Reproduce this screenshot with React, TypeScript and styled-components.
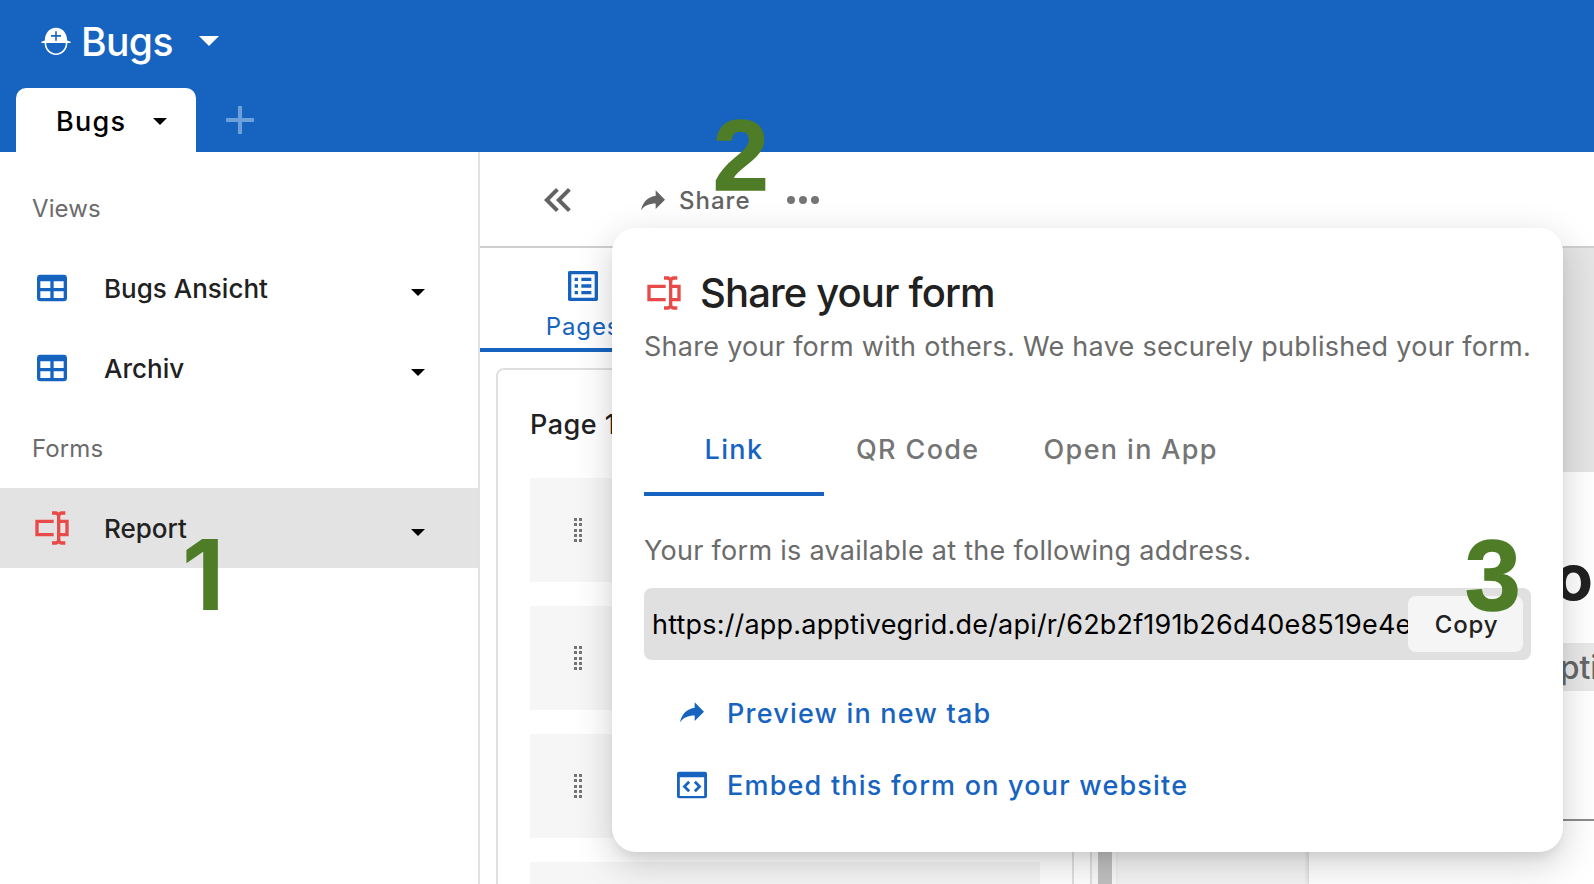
import React from 'react';
import styled, { createGlobalStyle } from 'styled-components';

const BLUE = '#1764c0';
const RED = '#e84a49';
const INK = '#212121';

const GlobalStyle = createGlobalStyle`
  *, *::before, *::after { box-sizing: border-box; }
  body {
    margin: 0;
    background: #fff;
    font-family: Inter, "Liberation Sans", sans-serif;
    overflow: hidden;
  }
`;

/* ---------- icons ---------- */

const Glyph = styled.svg<{ $size: number; $color: string }>`
  display: block;
  flex: none;
  width: ${p => p.$size}px;
  height: ${p => p.$size}px;
  fill: ${p => p.$color};
`;

type IconProps = { size: number; color: string };

const makeIcon = (d: string) => ({ size, color }: IconProps) => (
  <Glyph $size={size} $color={color} viewBox="0 0 24 24">
    <path d={d} />
  </Glyph>
);

const FormIcon = makeIcon(
  'M17,7H22V17H17V19A1,1 0 0,0 18,20H20V22H17.5C16.95,22 16,21.55 16,21C16,21.55 15.05,22 14.5,22H12V20H14A1,1 0 0,0 15,19V5A1,1 0 0,0 14,4H12V2H14.5C15.05,2 16,2.45 16,3C16,2.45 16.95,2 17.5,2H20V4H18A1,1 0 0,0 17,5V7M2,7H13V9H4V15H13V17H2V7M20,15V9H17V15H20Z'
);
const TableIcon = makeIcon(
  'M5,4H19A2,2 0 0,1 21,6V18A2,2 0 0,1 19,20H5A2,2 0 0,1 3,18V6A2,2 0 0,1 5,4M5,8V12H11V8H5M13,8V12H19V8H13M5,14V18H11V14H5M13,14V18H19V14H13Z'
);
const PagesIcon = makeIcon(
  'M19 5v14H5V5h14m1.1-2H3.9c-.5 0-.9.4-.9.9v16.2c0 .4.4.9.9.9h16.2c.4 0 .9-.5.9-.9V3.9c0-.5-.5-.9-.9-.9zM11 7h6v2h-6V7zm0 4h6v2h-6v-2zm0 4h6v2h-6zM7 7h2v2H7zm0 4h2v2H7zm0 4h2v2H7z'
);
const ShareIcon = makeIcon('M21,11L14,4V8C7,9 4,14 3,19C5.5,15.5 9,13.9 14,13.9V18L21,11Z');
const CollapseIcon = makeIcon(
  'M18.41,7.41L17,6L11,12L17,18L18.41,16.59L13.83,12L18.41,7.41M12.41,7.41L11,6L5,12L11,18L12.41,16.59L7.83,12L12.41,7.41Z'
);
const MoreIcon = makeIcon(
  'M6 10a2 2 0 1 0 0 4 2 2 0 0 0 0-4zM12 10a2 2 0 1 0 0 4 2 2 0 0 0 0-4zM18 10a2 2 0 1 0 0 4 2 2 0 0 0 0-4z'
);
const EmbedIcon = makeIcon(
  'M4.2 4H19.8A1.2 1.2 0 0 1 21 5.2V18.8A1.2 1.2 0 0 1 19.8 20H4.2A1.2 1.2 0 0 1 3 18.8V5.2A1.2 1.2 0 0 1 4.2 4ZM4.7 7.3V18.6H19.3V7.3ZM9.7 9.4L10.9 10.6L8.6 12.9L10.9 15.2L9.7 16.4L6.3 12.9ZM14.3 9.4L17.7 12.9L14.3 16.4L13.1 15.2L15.4 12.9L13.1 10.6Z'
);

const HelmetIcon = () => (
  <svg width="30" height="29" viewBox="0 0 30 29">
    <path
      fill="#fff"
      fillRule="evenodd"
      d="M3.8 13.4C4 6.2 8.6.8 15 .8S26 6.2 26.2 13.4L29.6 14.8V16H26.4C26.4 22.6 21.4 28 15 28S3.6 22.6 3.6 16H.4V14.8ZM14.2 4.2V8.1H10V9.7H14.2V13.8H15.8V9.7H20V8.1H15.8V4.2ZM5.2 16C5.2 21.6 9.4 26.4 15 26.4S24.8 21.6 24.8 16Z"
    />
  </svg>
);

const Caret = styled.span<{ $half: number; $color: string }>`
  flex: none;
  border: ${p => p.$half}px solid transparent;
  border-top: ${p => p.$half + 0.5}px solid ${p => p.$color};
  border-bottom: 0;
`;

/* ---------- shell ---------- */

const Screen = styled.div`
  position: relative;
  width: 1594px;
  height: 884px;
  overflow: hidden;
  display: flex;
  flex-direction: column;
`;

const Header = styled.header`
  height: 152px;
  flex: none;
  background: ${BLUE};
  display: flex;
  flex-direction: column;
  justify-content: space-between;
`;

const SpaceName = styled.div`
  display: flex;
  align-items: center;
  height: 82px;
  padding-left: 41px;
  color: #fff;
  font-size: 39px;
  font-weight: 500;
  letter-spacing: -0.6px;

  span:first-of-type { margin: 0 26px 0 10px; }
`;

const TabStrip = styled.nav`
  display: flex;
  align-items: center;
  padding-left: 16px;
  height: 64px;
`;

const SpaceTab = styled.div`
  display: flex;
  align-items: center;
  width: 180px;
  height: 64px;
  padding: 2px 0 0 40px;
  border-radius: 10px 10px 0 0;
  background: #fff;
  color: #000;
  font-size: 27px;
  font-weight: 500;
  letter-spacing: 1.3px;

  span:first-of-type { flex: none; width: 97px; }
`;

const AddTab = styled.svg`
  margin-left: 30px;
  width: 28px;
  height: 28px;
  fill: rgba(255, 255, 255, 0.38);
`;

const Body = styled.div`
  flex: 1;
  min-height: 0;
  display: flex;
`;

/* ---------- sidebar ---------- */

const Sidebar = styled.aside`
  width: 480px;
  flex: none;
  padding-top: 16px;
  border-right: 2px solid #e2e2e2;
`;

const SectionLabel = styled.div`
  height: 80px;
  padding: 1px 0 0 32px;
  line-height: 80px;
  font-size: 24px;
  font-weight: 430;
  letter-spacing: 0.1px;
  color: #6b6b6b;
`;

const NavRow = styled.div<{ $active?: boolean }>`
  display: flex;
  align-items: center;
  height: 80px;
  padding: 0 53px 0 32px;
  background: ${p => (p.$active ? '#e3e3e3' : 'transparent')};
  color: ${INK};
  font-size: 26px;
  font-weight: 480;
  letter-spacing: 0;
`;

const NavName = styled.span`
  flex: 1;
  padding: 1px 0 0 32px;
`;

const CaretSlot = styled.span`
  display: flex;
  padding-top: 8px;
`;

/* ---------- editor ---------- */

const Editor = styled.main`
  flex: 1;
  min-width: 0;
  display: flex;
  flex-direction: column;
`;

const Toolbar = styled.div`
  display: flex;
  align-items: center;
  height: 96px;
  flex: none;
  padding: 2px 0 0 54px;
  border-bottom: 2px solid #cfcfcf;
  color: #636363;
`;

const ShareButton = styled.div`
  display: flex;
  align-items: center;
  margin: 0 28px 0 55px;
  padding-top: 1px;
  gap: 10px;
  font-size: 24px;
  font-weight: 480;
  letter-spacing: 1px;
`;

const Workspace = styled.div`
  flex: 1;
  min-height: 0;
  display: flex;
`;

const PagesPane = styled.section`
  width: 612px;
  flex: none;
  display: flex;
  flex-direction: column;
  border-right: 2px solid #e0e0e0;
`;

const PagesTab = styled.div`
  display: flex;
  flex-direction: column;
  align-items: center;
  width: 205px;
  height: 100px;
  padding-top: 18px;
  color: ${BLUE};
  font-size: 24px;
  font-weight: 400;
  line-height: 42px;
  letter-spacing: 0.9px;

  span { padding-left: 1px; }
`;

const PaneTabs = styled.div`
  flex: none;
  height: 104px;
  border-bottom: 4px solid ${BLUE};
`;

const PageCard = styled.div`
  flex: none;
  height: 700px;
  width: 578px;
  margin: 16px 0 0 16px;
  padding: 0 32px;
  border: 2px solid #e0e0e0;
  border-radius: 8px;
`;

const PageTitle = styled.div`
  height: 108px;
  line-height: 109px;
  color: ${INK};
  font-size: 27px;
  font-weight: 500;
  letter-spacing: 0.5px;
`;

const FieldRow = styled.div`
  display: flex;
  align-items: center;
  height: 104px;
  margin-bottom: 24px;
  padding-left: 44px;
  background: #f6f6f6;
`;

const DragHandle = styled.div`
  display: grid;
  grid-template-columns: 3px 3px;
  column-gap: 2px;
  row-gap: 2.33px;

  i { height: 3px; background: #757575; }
`;

const ScrollTrack = styled.div`
  width: 26px;
  padding: 0 4px 0 6px;
  background: #fafafa;
  border-right: 2px solid #f0f0f0;
`;

const ScrollThumb = styled.div`
  height: 100%;
  background: #c1c1c1;
`;

const Preview = styled.section`
  flex: 1;
  min-width: 0;
  display: flex;
  flex-direction: column;
`;

const Cover = styled.div`
  flex: none;
  position: relative;
  height: 224px;
  background: #e5e5e5;
`;

const Canvas = styled.div`
  flex: 1;
  display: flex;
  padding-left: 191px;
  background: #f5f5f5;
`;

const FormSheet = styled.div`
  flex: 1;
  min-width: 0;
  padding: 60px 0 0 125px;
  background: #fff;
  overflow: hidden;
  box-shadow: 0 0 6px rgba(0, 0, 0, 0.2);
`;

const FormTitle = styled.div`
  height: 111px;
  line-height: 90px;
  font-size: 64px;
  font-weight: 700;
  white-space: nowrap;
  color: ${INK};
`;

const FormDescription = styled.div`
  height: 48px;
  line-height: 50px;
  margin-right: -43px;
  background: #e9e9e9;
  color: #666;
  font-size: 32px;
  font-weight: 500;
  white-space: nowrap;
  display: flex;
  justify-content: flex-end;
`;

const Divider = styled.div`
  margin-top: 128px;
  border-top: 2px solid #8c8c8c;
`;

/* ---------- share dialog ---------- */

const Popover = styled.div`
  position: absolute;
  left: 612px;
  top: 228px;
  width: 951px;
  height: 624px;
  padding: 41px 32px 0;
  border-radius: 24px;
  background: #fff;
  box-shadow: 0 8px 12px -4px rgba(0, 0, 0, 0.08), 0 12px 36px 2px rgba(0, 0, 0, 0.17);
  white-space: nowrap;
`;

const PopoverTitle = styled.div`
  display: flex;
  align-items: center;
  gap: 16px;
  height: 47px;
  color: ${INK};
  font-size: 40px;
  font-weight: 500;
  letter-spacing: -0.88px;
`;

const Hint = styled.div<{ $height: number }>`
  height: ${p => p.$height}px;
  padding-top: 1px;
  line-height: ${p => p.$height}px;
  color: #6b6b6b;
  font-size: 27px;
  letter-spacing: 0.28px;
`;

const ShareTabs = styled.div`
  display: flex;
  height: 92px;
  margin: 28px 0 21px;
`;

const ShareTab = styled.div<{ $active?: boolean }>`
  width: ${p => (p.$active ? '180px' : 'auto')};
  padding: 0 32px;
  line-height: 91px;
  text-align: center;
  border-bottom: 4px solid ${p => (p.$active ? BLUE : 'transparent')};
  color: ${p => (p.$active ? BLUE : '#757575')};
  font-size: 27px;
  font-weight: 480;
  letter-spacing: 1.35px;
`;

const LinkField = styled.div`
  display: flex;
  align-items: center;
  height: 72px;
  margin-top: 5px;
  padding: 0 8px;
  border-radius: 8px;
  background: #e0e0e0;
  color: #000;
  font-size: 27px;
`;

const LinkText = styled.div`
  flex: 1;
  min-width: 0;
  overflow: hidden;
  letter-spacing: 0.19px;
`;

const CopyButton = styled.div`
  flex: none;
  width: 115px;
  height: 56px;
  padding-left: 2px;
  line-height: 57px;
  border-radius: 8px;
  background: #f5f5f5;
  color: ${INK};
  text-align: center;
  font-size: 24px;
  font-weight: 480;
  letter-spacing: 0.8px;
`;

const Actions = styled.div`
  padding: 17px 0 0 28px;
`;

const Action = styled.div`
  display: flex;
  align-items: center;
  height: 72px;
  color: ${BLUE};
  font-size: 27px;
  font-weight: 490;
  letter-spacing: 1.2px;
`;

const ActionIcon = styled.div`
  display: flex;
  justify-content: center;
  width: 40px;
  margin-right: 15px;
`;

/* numbered step markers laid over the interface */
const Step = styled.div<{ $x: number; $y: number; $grotesk?: boolean }>`
  position: absolute;
  left: ${p => p.$x}px;
  top: ${p => p.$y}px;
  color: #4f7c27;
  font-weight: 700;
  font-size: ${p => (p.$grotesk ? 100 : 98)}px;
  line-height: 100px;
  font-family: ${p => (p.$grotesk ? '' : 'Inter, ')}"Liberation Sans", sans-serif;
  -webkit-text-stroke: ${p => (p.$grotesk ? '1.4px #4f7c27' : '0')};
`;

const views = ['Bugs Ansicht', 'Archiv'];

const App = () => (
  <>
    <GlobalStyle />
    <Screen>
      <Header>
        <SpaceName>
          <HelmetIcon />
          <span>Bugs</span>
          <Caret $half={10} $color="#fff" />
        </SpaceName>
        <TabStrip>
          <SpaceTab>
            <span>Bugs</span>
            <Caret $half={7} $color="#000" />
          </SpaceTab>
          <AddTab viewBox="0 0 28 28">
            <path d="M12 0h4v12h12v4H16v12h-4V16H0v-4h12z" />
          </AddTab>
        </TabStrip>
      </Header>
      <Body>
        <Sidebar>
          <SectionLabel>Views</SectionLabel>
          {views.map(name => (
            <NavRow key={name}>
              <TableIcon size={40} color={BLUE} />
              <NavName>{name}</NavName>
              <CaretSlot><Caret $half={7} $color="#000" /></CaretSlot>
            </NavRow>
          ))}
          <SectionLabel>Forms</SectionLabel>
          <NavRow $active>
            <FormIcon size={40} color={RED} />
            <NavName>Report</NavName>
            <CaretSlot><Caret $half={7} $color="#000" /></CaretSlot>
          </NavRow>
        </Sidebar>
        <Editor>
          <Toolbar>
            <CollapseIcon size={48} color="#636363" />
            <ShareButton>
              <ShareIcon size={32} color="#636363" />
              <span>Share</span>
            </ShareButton>
            <MoreIcon size={48} color="#757575" />
          </Toolbar>
          <Workspace>
            <PagesPane>
              <PaneTabs>
                <PagesTab>
                  <PagesIcon size={40} color={BLUE} />
                  <span>Pages</span>
                </PagesTab>
              </PaneTabs>
              <PageCard>
                <PageTitle>Page 1</PageTitle>
                {[0, 1, 2, 3].map(row => (
                  <FieldRow key={row}>
                    <DragHandle>
                      {Array.from({ length: 10 }, (_, i) => <i key={i} />)}
                    </DragHandle>
                  </FieldRow>
                ))}
              </PageCard>
            </PagesPane>
            <ScrollTrack>
              <ScrollThumb />
            </ScrollTrack>
            <Preview>
              <Cover />
              <Canvas>
                <FormSheet>
                  <FormTitle>Report</FormTitle>
                  <FormDescription>Description</FormDescription>
                  <Divider />
                </FormSheet>
              </Canvas>
            </Preview>
          </Workspace>
        </Editor>
      </Body>

      <Popover>
        <PopoverTitle>
          <FormIcon size={40} color={RED} />
          <span>Share your form</span>
        </PopoverTitle>
        <Hint $height={60}>Share your form with others. We have securely published your form.</Hint>
        <ShareTabs>
          <ShareTab $active>Link</ShareTab>
          <ShareTab>QR Code</ShareTab>
          <ShareTab>Open in App</ShareTab>
        </ShareTabs>
        <Hint $height={66}>Your form is available at the following address.</Hint>
        <LinkField>
          <LinkText>https://app.apptivegrid.de/api/r/62b2f191b26d40e8519e4e</LinkText>
          <CopyButton>Copy</CopyButton>
        </LinkField>
        <Actions>
          <Action>
            <ActionIcon><ShareIcon size={32} color={BLUE} /></ActionIcon>
            Preview in new tab
          </Action>
          <Action>
            <ActionIcon><EmbedIcon size={40} color={BLUE} /></ActionIcon>
            Embed this form on your website
          </Action>
        </Actions>
      </Popover>

      <Step $x={182} $y={525}>1</Step>
      <Step $x={713} $y={105} $grotesk>2</Step>
      <Step $x={1465} $y={525} $grotesk>3</Step>
    </Screen>
  </>
);

export default App;
